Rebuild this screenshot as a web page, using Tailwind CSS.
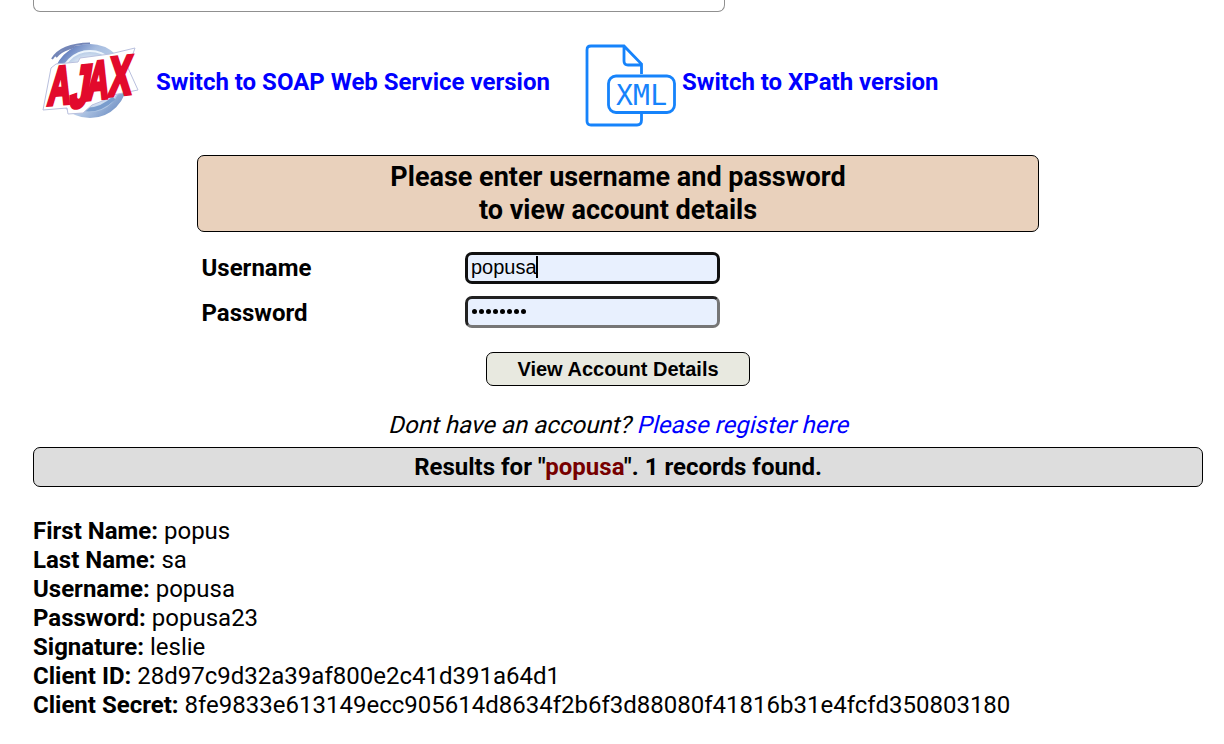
<!DOCTYPE html>
<html lang="en">
<head>
<meta charset="utf-8">
<title>User Info</title>
<script src="https://cdn.jsdelivr.net/npm/@tailwindcss/browser@4"></script>
</head>
<body class="bg-white text-black h-[744px] overflow-hidden font-[Roboto,sans-serif] text-[24px] leading-[29px]">
<main class="pl-[33px] w-[1203px]">
  <div class="h-[12px] w-[692px] rounded-b-[7px] border border-t-0 border-[#909090]"></div>
  <nav class="flex h-[143px] font-bold text-[#0000ff]">
    <a class="flex w-[550px]">
      <svg class="mt-[18px] -ml-[3px] w-[120px] h-[100px] shrink-0 overflow-visible" viewBox="0 0 120 100">
        <defs>
          <linearGradient id="ring" x1="0" y1="0" x2="1" y2="1"><stop offset="0" stop-color="#4260ae"/><stop offset=".3" stop-color="#a6bcdf"/><stop offset=".6" stop-color="#c2d5ed"/><stop offset="1" stop-color="#6284bd"/></linearGradient>
          <radialGradient id="glow"><stop offset="0" stop-color="#fff"/><stop offset=".6" stop-color="#e6eff9"/><stop offset="1" stop-color="#9fb9dc"/></radialGradient>
        </defs>
        <path d="M22 29Q31 14 60 13.500M26 27Q35 16 58 16" fill="none" stroke="#7486b8" stroke-width="2"/>
        <circle cx="60" cy="51" r="34" fill="url(#glow)" stroke="url(#ring)" stroke-width="6"/>
        <circle cx="60" cy="50" r="29" fill="none" stroke="#edf5fc" stroke-width="2"/>
        <path d="M36 70Q60 90 84 68" fill="none" stroke="#7a9dcd" stroke-width="4"/>
        <path d="M21 38L26 34L48 32L50 28L80 24L105 18L98 38L108 60L83 65L75 70L62 75L53 83L38 84L37 78L13 80Z" fill="#fff" stroke="#b9c0de" stroke-width="1"/>
        <g font-family="Liberation Sans,sans-serif" font-weight="bold" fill="#e20a2c" stroke="#e20a2c" stroke-width="4" stroke-linejoin="miter">
          <text transform="matrix(.58 -.05 -.1 1 17 75)" font-size="54">A</text>
          <text transform="matrix(.64 -.07 -.17 1.1 38.500 78)" font-size="54">J</text>
          <text transform="matrix(.57 -.06 -.1 1 55.500 70)" font-size="54">A</text>
          <text transform="matrix(.62 -.07 -.08 1.02 78 66)" font-size="54">X</text>
        </g>
      </svg>
      <span class="mt-[56px] ml-[6px] whitespace-nowrap">Switch to SOAP Web Service version</span>
    </a>
    <a class="flex">
      <svg class="mt-[31px] w-[94px] h-[84px] shrink-0" viewBox="0 0 94 84" fill="none" stroke="#1683fb" stroke-width="2.8">
        <path d="M58.500 31V21L41 3H8Q4 3 4 7V78Q4 82 8 82H54Q58.500 82 58.500 77V70M41 3V18Q41 22 45 22H58"/>
        <rect x="25.500" y="33" width="66" height="36.500" rx="7.500"/>
        <g transform="translate(33 61.500)" font-family="DejaVu Sans Mono,monospace" font-weight="normal" font-size="28" stroke-width="0" fill="#1683fb">
          <text x="0" y="0" textLength="51" lengthAdjust="spacing">XML</text>
        </g>
      </svg>
      <span class="mt-[56px] ml-[5px] -mr-px whitespace-nowrap">Switch to XPath version</span>
    </a>
  </nav>
  <form class="ml-[164px] w-[842px]">
    <div class="h-[77px] rounded-[7px] border border-black bg-[#e9d1bc] text-center text-[27px] font-bold leading-[33px] pt-[5px]">Please enter username and password<br>to view account details</div>
    <div class="mt-[20px] flex h-[32px] pl-[4.500px] font-bold"><label class="w-[263px] pt-[2px]">Username</label>
      <div class="flex w-[255.500px] items-start rounded-[7px] border-[3px] border-[#101010] bg-[#e8f0fe] pl-[3.500px] font-[Liberation_Sans,sans-serif] text-[20px] font-normal leading-[24px]"><span>popusa</span><span class="-ml-px mt-[1px] h-[22px] w-[2px] bg-black"></span></div>
    </div>
    <div class="mt-[12px] flex h-[32px] pl-[4.500px] font-bold"><label class="w-[263px] pt-[3px]">Password</label>
      <div class="flex w-[255.500px] items-start pt-[10px] gap-[2px] rounded-[7px] border-[3px] border-t-[#222] border-l-[#222] border-r-[#767676] border-b-[#767676] bg-[#e8f0fe] pl-[4.500px]"><i class="size-[5px] rounded-full bg-black"></i><i class="size-[5px] rounded-full bg-black"></i><i class="size-[5px] rounded-full bg-black"></i><i class="size-[5px] rounded-full bg-black"></i><i class="size-[5px] rounded-full bg-black"></i><i class="size-[5px] rounded-full bg-black"></i><i class="size-[5px] rounded-full bg-black"></i><i class="size-[5px] rounded-full bg-black"></i></div>
    </div>
    <button type="button" class="mt-[24px] mx-auto block h-[34px] w-[264px] rounded-[7px] border border-black bg-[#e8e9e0] font-[Liberation_Sans,sans-serif] text-[20px] font-bold leading-[30px]">View Account Details</button>
    <p class="mt-[25px] h-[36px] text-center whitespace-nowrap leading-[29px]"><span class="inline-block origin-[50%_22px] -skew-x-[14deg]">Dont have an account? <a class="text-[#0000ff]">Please register here</a></span></p>
  </form>
  <div class="h-[40px] rounded-[7px] border border-black bg-[#dddddd] text-center font-bold leading-[38px]">Results for "<span class="text-[#770000]">popusa</span>". 1 records found.</div>
  <div class="mt-[30px] whitespace-nowrap">
    <p><b>First Name:</b> popus</p>
    <p><b>Last Name:</b> sa</p>
    <p><b>Username:</b> popusa</p>
    <p><b>Password:</b> popusa23</p>
    <p><b>Signature:</b> leslie</p>
    <p><b>Client ID:</b> 28d97c9d32a39af800e2c41d391a64d1</p>
    <p><b>Client Secret:</b> 8fe9833e613149ecc905614d8634f2b6f3d88080f41816b31e4fcfd350803180</p>
  </div>
</main>
</body>
</html>
